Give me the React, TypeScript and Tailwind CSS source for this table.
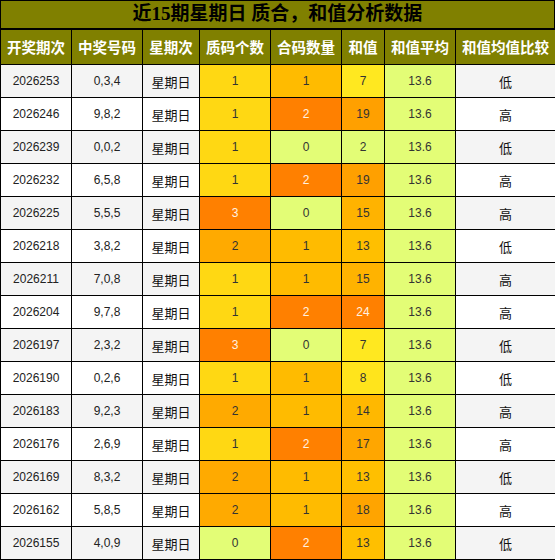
import React from 'react';

const rows = [
  ['2026253', '0,3,4', 1, 1, 7, '低'],
  ['2026246', '9,8,2', 1, 2, 19, '高'],
  ['2026239', '0,0,2', 1, 0, 2, '低'],
  ['2026232', '6,5,8', 1, 2, 19, '高'],
  ['2026225', '5,5,5', 3, 0, 15, '高'],
  ['2026218', '3,8,2', 2, 1, 13, '低'],
  ['2026211', '7,0,8', 1, 1, 15, '高'],
  ['2026204', '9,7,8', 1, 2, 24, '高'],
  ['2026197', '2,3,2', 3, 0, 7, '低'],
  ['2026190', '0,2,6', 1, 1, 8, '低'],
  ['2026183', '9,2,3', 2, 1, 14, '高'],
  ['2026176', '2,6,9', 1, 2, 17, '高'],
  ['2026169', '8,3,2', 2, 1, 13, '低'],
  ['2026162', '5,8,5', 2, 1, 18, '高'],
  ['2026155', '4,0,9', 0, 2, 13, '低'],
] as const;

const zhiColor: Record<number, string> = {
  0: 'bg-[#e3fd76] text-[#333]',
  1: 'bg-[#ffd813] text-[#333]',
  2: 'bg-[#ffaa00] text-[#333]',
  3: 'bg-[#ff8000] text-[#fff2e0]',
};

const heColor: Record<number, string> = {
  0: 'bg-[#e3fd76] text-[#333]',
  1: 'bg-[#ffbb00] text-[#333]',
  2: 'bg-[#ff8000] text-[#fff2e0]',
};

const sumColor: Record<number, string> = {
  2: 'bg-[#e3fd76] text-[#333]',
  7: 'bg-[#ffe820] text-[#333]',
  8: 'bg-[#ffe41c] text-[#333]',
  13: 'bg-[#ffbf00] text-[#333]',
  14: 'bg-[#ffb800] text-[#333]',
  15: 'bg-[#ffb300] text-[#333]',
  17: 'bg-[#ffa600] text-[#333]',
  18: 'bg-[#ffa400] text-[#333]',
  19: 'bg-[#ffa000] text-[#333]',
  24: 'bg-[#ff8000] text-[#fff2e0]',
};

const num = "font-['Liberation_Sans',sans-serif] text-[12px]";
const cjk = "font-['Noto_Sans_CJK_SC',sans-serif] text-[13px] text-[#111]";

export default function App() {
  const headers = ['开奖期次', '中奖号码', '星期次', '质码个数', '合码数量', '和值', '和值平均', '和值均值比较'];
  const widths = ['w-[71px]', 'w-[71px]', 'w-[57px]', 'w-[71px]', 'w-[71px]', 'w-[43px]', 'w-[71px]', 'w-[100px]'];

  return (
    <div className="w-[555px] bg-white">
      <div className="h-[30px] bg-[#808000] border border-black border-b-2 flex items-center justify-center font-['Liberation_Serif','Noto_Sans_CJK_SC',serif] font-bold text-[19px] text-black">
        近15期星期日 质合，和值分析数据
      </div>
      <table className="w-[555px] table-fixed border-collapse">
        <colgroup>
          {widths.map((w, i) => (
            <col key={i} className={w} />
          ))}
        </colgroup>
        <thead>
          <tr className="h-[34px] bg-[#808000]">
            {headers.map((h) => (
              <th
                key={h}
                className="border border-black border-t-0 text-white font-bold text-[14.5px] font-['Noto_Sans_CJK_SC',sans-serif] p-0"
              >
                {h}
              </th>
            ))}
          </tr>
        </thead>
        <tbody>
          {rows.map((r, i) => {
            const base = i % 2 === 0 ? 'bg-[#f4f4f4]' : 'bg-white';
            return (
              <tr key={r[0]} className="h-[33px] text-center">
                <td className={`border border-black p-0 text-[#222] ${base} ${num}`}>{r[0]}</td>
                <td className={`border border-black p-0 text-[#222] ${base} ${num}`}>{r[1]}</td>
                <td className={`border border-black p-0 pt-[2px] ${base} ${cjk}`}>星期日</td>
                <td className={`border border-black p-0 ${zhiColor[r[2]]} ${num}`}>{r[2]}</td>
                <td className={`border border-black p-0 ${heColor[r[3]]} ${num}`}>{r[3]}</td>
                <td className={`border border-black p-0 ${sumColor[r[4]]} ${num}`}>{r[4]}</td>
                <td className={`border border-black p-0 bg-[#e3fd76] text-[#333] ${num}`}>13.6</td>
                <td className={`border border-black p-0 pt-[2px] ${base} ${cjk}`}>{r[5]}</td>
              </tr>
            );
          })}
        </tbody>
      </table>
    </div>
  );
}
